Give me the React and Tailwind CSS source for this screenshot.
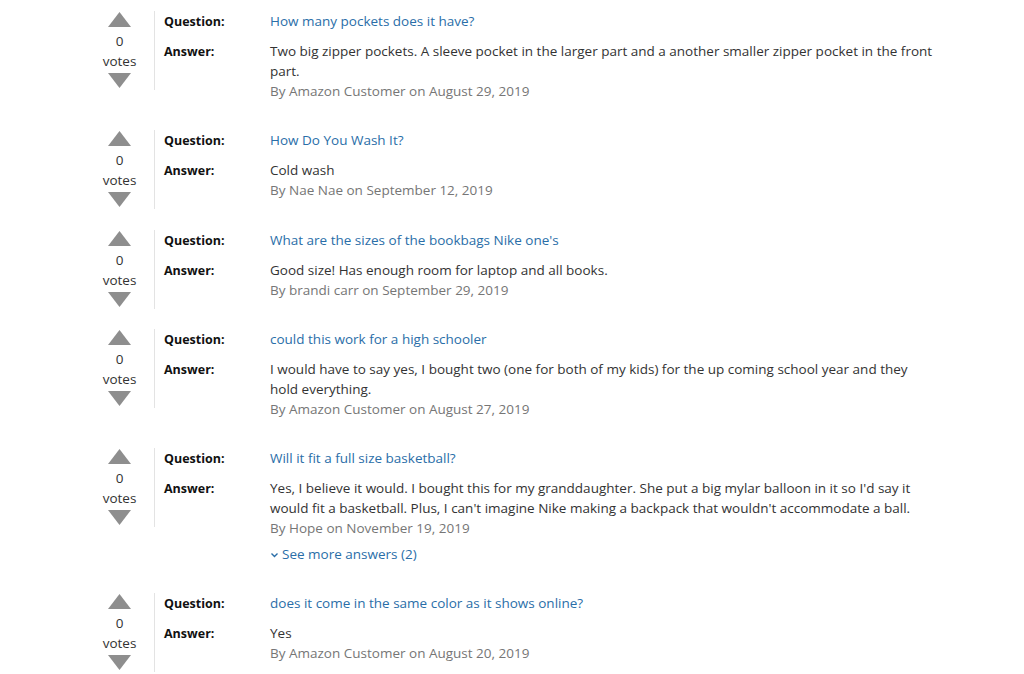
import React from "react";

const items = [
  {
    q: "How many pockets does it have?",
    a: ["Two big zipper pockets. A sleeve pocket in the larger part and a another smaller zipper pocket in the front", "part."],
    by: "By Amazon Customer on August 29, 2019",
  },
  { q: "How Do You Wash It?", a: ["Cold wash"], by: "By Nae Nae on September 12, 2019" },
  {
    q: "What are the sizes of the bookbags Nike one's",
    a: ["Good size! Has enough room for laptop and all books."],
    by: "By brandi carr on September 29, 2019",
  },
  {
    q: "could this work for a high schooler",
    a: ["I would have to say yes, I bought two (one for both of my kids) for the up coming school year and they", "hold everything."],
    by: "By Amazon Customer on August 27, 2019",
  },
  {
    q: "Will it fit a full size basketball?",
    a: [
      "Yes, I believe it would. I bought this for my granddaughter. She put a big mylar balloon in it so I'd say it",
      "would fit a basketball. Plus, I can't imagine Nike making a backpack that wouldn't accommodate a ball.",
    ],
    by: "By Hope on November 19, 2019",
    more: "See more answers (2)",
  },
  { q: "does it come in the same color as it shows online?", a: ["Yes"], by: "By Amazon Customer on August 20, 2019" },
];

function Up() {
  return (
    <svg width="23" height="15" viewBox="0 0 23 15" className="block">
      <polygon points="11.5,0 23,15 0,15" fill="#8e8e8e" />
    </svg>
  );
}
function Down() {
  return (
    <svg width="23" height="15" viewBox="0 0 23 15" className="block">
      <polygon points="0,0 23,0 11.5,15" fill="#8e8e8e" />
    </svg>
  );
}

export default function App() {
  return (
    <div
      className="w-[1024px] h-[674px] bg-white overflow-hidden pt-[11px] text-[13.5px] leading-[20px] text-[#333]"
      style={{ fontFamily: '"Open Sans", "Noto Sans", sans-serif' }}
    >
      {items.map((it, i) => (
        <div key={i} className="flex items-start mb-[29.3px]">
          <div className="ml-[100px] w-[55px] pr-[15px] -mb-[30px] border-r border-[#e3e3e3] flex flex-col items-center pt-[1px] pb-[2px]">
            <Up />
            <div className="mt-[4px] text-[#333]">0</div>
            <div className="text-[#333]">votes</div>
            <div className="mt-[2px]">
              <Down />
            </div>
          </div>
          <div className="pl-[9px] flex-1">
            <div className="flex items-start">
              <div className="w-[106px] mt-[1px] -mb-[1px] font-bold text-[12.5px] leading-[20px] text-[#111]">Question:</div>
              <div className="text-[#2a6ea8]">{it.q}</div>
            </div>
            <div className="flex items-start mt-[10px]">
              <div className="w-[106px] mt-[1px] font-bold text-[12.5px] leading-[20px] text-[#111]">Answer:</div>
              <div className="w-[680px]">
                {it.a.map((l, j) => (
                  <div key={j} className="whitespace-nowrap">{l}</div>
                ))}
                <div className="text-[#767676]">{it.by}</div>
                {it.more && (
                  <div className="mt-[6px] flex items-center text-[#2a6ea8]">
                    <svg width="9" height="6" viewBox="0 0 9 6" className="mr-[3px] mt-[1px]">
                      <polyline points="1.5,1.5 4.5,4.5 7.5,1.5" fill="none" stroke="#2a6ea8" strokeWidth="1.4" />
                    </svg>
                    {it.more}
                  </div>
                )}
              </div>
            </div>
          </div>
        </div>
      ))}
    </div>
  );
}
